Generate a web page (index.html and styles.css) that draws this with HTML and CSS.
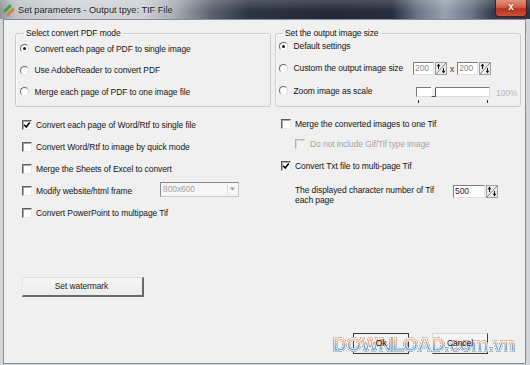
FILE: index.html
```html
<!DOCTYPE html>
<html>
<head>
<meta charset="utf-8">
<title>Set parameters</title>
<link rel="stylesheet" href="styles.css">
</head>
<body>
<div class="window">
  <div class="titlebar">
    <svg class="appicon" viewBox="0 0 12 12" width="12" height="12">
      <line x1="2" y1="7" x2="7" y2="2" stroke="#3f9a3a" stroke-width="2.6" stroke-linecap="round"/>
      <line x1="5" y1="10.5" x2="10" y2="5.5" stroke="#e0782e" stroke-width="2.6" stroke-linecap="round"/>
    </svg>
    <span class="title">Set parameters - Output tpye: TIF File</span>
    <div class="close">x</div>
  </div>

  <div class="client">
    <div class="groups">
      <fieldset class="group group-pdf">
        <legend>Select convert PDF mode</legend>
        <div class="opt"><span class="radio on"></span><span>Convert each page of PDF to single image</span></div>
        <div class="opt"><span class="radio"></span><span>Use AdobeReader to convert PDF</span></div>
        <div class="opt"><span class="radio"></span><span>Merge each page of PDF to one image file</span></div>
      </fieldset>
      <fieldset class="group group-size">
        <legend>Set the output image size</legend>
        <div class="opt opt-first"><span class="radio on"></span><span>Default settings</span></div>
        <div class="opt opt-mid">
          <span class="radio"></span><span class="optlbl">Custom the output image size</span>
          <div class="spin">
            <span class="field">200</span>
            <svg class="spinbtn" viewBox="0 0 12 13" width="12" height="13">
              <rect x="0.5" y="0.5" width="11" height="12" fill="#ececec" stroke="#a0a0a0"/>
              <line x1="1" y1="12" x2="11" y2="1" stroke="#666" stroke-width="0.8"/>
              <path d="M3.5 1.6 L1.7 4.2 H5.3Z" fill="#111"/>
              <line x1="3.5" y1="3.8" x2="3.5" y2="7" stroke="#111" stroke-width="1"/>
              <path d="M8.5 11.4 L6.7 8.8 H10.3Z" fill="#111"/>
              <line x1="8.5" y1="6" x2="8.5" y2="9.2" stroke="#111" stroke-width="1"/>
            </svg>
          </div>
          <span class="times">x</span>
          <div class="spin">
            <span class="field">200</span>
            <svg class="spinbtn" viewBox="0 0 12 13" width="12" height="13">
              <rect x="0.5" y="0.5" width="11" height="12" fill="#ececec" stroke="#a0a0a0"/>
              <line x1="1" y1="12" x2="11" y2="1" stroke="#666" stroke-width="0.8"/>
              <path d="M3.5 1.6 L1.7 4.2 H5.3Z" fill="#111"/>
              <line x1="3.5" y1="3.8" x2="3.5" y2="7" stroke="#111" stroke-width="1"/>
              <path d="M8.5 11.4 L6.7 8.8 H10.3Z" fill="#111"/>
              <line x1="8.5" y1="6" x2="8.5" y2="9.2" stroke="#111" stroke-width="1"/>
            </svg>
          </div>
        </div>
        <div class="opt opt-last">
          <span class="radio"></span><span class="optlbl">Zoom image as scale</span>
          <div class="slider">
            <div class="track"><span class="thumb"></span></div>
            <div class="ticks"><span></span><span></span></div>
          </div>
          <span class="pct">100%</span>
        </div>
      </fieldset>
    </div>

    <div class="checks">
      <div class="col col-left">
        <div class="crow"><span class="cb on"><svg viewBox="0 0 8 8" width="8" height="8"><path d="M1.2 3.8 L3.2 6 L6.8 1.6" fill="none" stroke="#000" stroke-width="1.6"/></svg></span><span>Convert each page of Word/Rtf to single file</span></div>
        <div class="crow"><span class="cb"></span><span>Convert Word/Rtf to image by quick mode</span></div>
        <div class="crow"><span class="cb"></span><span>Merge the Sheets of Excel to convert</span></div>
        <div class="crow"><span class="cb"></span><span class="clbl">Modify website/html frame</span>
          <div class="combo"><span class="combo-text">800x600</span><span class="combo-btn"><svg viewBox="0 0 7 4" width="7" height="4"><path d="M1 0.5 H6 L3.5 3.5Z" fill="#9a9a9a"/></svg></span></div>
        </div>
        <div class="crow"><span class="cb"></span><span>Convert PowerPoint to multipage Tif</span></div>
      </div>
      <div class="col col-right">
        <div class="crow r1"><span class="cb"></span><span>Merge the converted images to one Tif</span></div>
        <div class="crow r2 indent"><span class="cb disabled"></span><span class="disabled-text">Do not include Gif/Tif type image</span></div>
        <div class="crow r3"><span class="cb on"><svg viewBox="0 0 8 8" width="8" height="8"><path d="M1.2 3.8 L3.2 6 L6.8 1.6" fill="none" stroke="#000" stroke-width="1.6"/></svg></span><span>Convert Txt file to multi-page Tif</span></div>
        <div class="tifrow indent">
          <span class="tiflbl">The displayed character number of Tif each page</span>
          <div class="spin spin-500">
            <span class="field field-dark">500</span>
            <svg class="spinbtn" viewBox="0 0 12 13" width="12" height="13">
              <rect x="0.5" y="0.5" width="11" height="12" fill="#ececec" stroke="#a0a0a0"/>
              <line x1="1" y1="12" x2="11" y2="1" stroke="#666" stroke-width="0.8"/>
              <path d="M3.5 1.6 L1.7 4.2 H5.3Z" fill="#111"/>
              <line x1="3.5" y1="3.8" x2="3.5" y2="7" stroke="#111" stroke-width="1"/>
              <path d="M8.5 11.4 L6.7 8.8 H10.3Z" fill="#111"/>
              <line x1="8.5" y1="6" x2="8.5" y2="9.2" stroke="#111" stroke-width="1"/>
            </svg>
          </div>
        </div>
      </div>
    </div>

    <div class="wm-row"><div class="btn btn-wm">Set watermark</div></div>

    <div class="actions">
      <div class="btn btn-ok"><span class="btn-label">Ok</span></div>
      <div class="btn btn-cancel"><span class="btn-label">Cancel</span></div>
    </div>

    <div class="stamp">DOWNLOAD<span class="stamp-small">.com.vn</span></div>
  </div>
</div>
</body>
</html>
```

FILE: styles.css
```css
* { box-sizing: border-box; }

html, body {
  margin: 0;
  padding: 0;
}

body {
  width: 530px;
  height: 365px;
  overflow: hidden;
  background: #d2d6da;
  font-family: "Liberation Sans", Arial, sans-serif;
  font-size: 8.5px;
  letter-spacing: -0.1px;
  color: #151515;
}

.window {
  display: flex;
  flex-direction: column;
  height: 365px;
}

/* ---------- title bar ---------- */
.titlebar {
  height: 19px;
  flex: none;
  display: flex;
  align-items: center;
  background:
    linear-gradient(to bottom, rgba(255,255,255,0.18), rgba(255,255,255,0) 60%),
    linear-gradient(to right, #8f959c 0%, #bfc3c7 3%, #d2d5d8 14%, #cdd0d3 27%, #a8adb3 33%, #59616d 40%, #2c3444 47%, #222938 62%, #262e3e 74%, #6e7888 79%, #98a2b0 84%, #6b7585 89%, #343c4c 93%, #2e3646 100%);
}

.appicon {
  margin-left: 3px;
  flex: none;
}

.title {
  margin-left: 3px;
  font-size: 9.2px;
  letter-spacing: 0;
  color: #1c1c1c;
  text-shadow: 0 0 3px #e6e8ea;
}

.close {
  margin-left: auto;
  margin-right: 3px;
  align-self: flex-start;
  width: 32px;
  height: 17px;
  border: 1px solid #4c1a14;
  border-top: none;
  border-radius: 0 0 4px 4px;
  background: linear-gradient(to bottom, #e4907c 0%, #d0604a 45%, #b8321e 55%, #c8503a 100%);
  color: #fff;
  font-weight: bold;
  font-size: 10px;
  letter-spacing: 0;
  line-height: 14px;
  text-align: center;
  text-shadow: 0 0 2px #5a1a10;
}

/* ---------- client ---------- */
.client {
  position: relative;
  width: 523px;
  height: 345px;
  margin-left: 3px;
  background: #f0f0f0;
  border: 1px solid #8a8c90;
  display: flex;
  flex-direction: column;
}

.groups {
  display: flex;
  gap: 4px;
  margin: 8px 0 0 11px;
  align-items: stretch;
}

.group {
  margin: 0;
  min-width: 0;
  border: 1px solid #c9ccd0;
  border-radius: 3px;
  box-shadow: inset 1px 1px 0 #fafafa;
}

.group legend {
  line-height: 10px;
  padding: 0 2px;
  margin-left: 4px;
  color: #111;
}

.group-pdf {
  width: 256px;
  padding: 0 0 3px 4px;
}

.group-pdf .opt {
  height: 21.5px;
}

.group-size {
  width: 246px;
  padding: 0 0 3px 3px;
}

.opt {
  display: flex;
  align-items: center;
  white-space: nowrap;
}

.opt-first { height: 22px; margin-top: -3px; }
.opt-mid { height: 22px; }
.opt-last { height: 23px; }

.optlbl {
  width: 119.5px;
  flex: none;
}

.radio {
  width: 9px;
  height: 9px;
  flex: none;
  margin-right: 5.5px;
  border-radius: 50%;
  border: 1px solid;
  border-color: #6a6a6a #d8d8d8 #ececec #6a6a6a;
  background: #fff;
  position: relative;
}

.radio.on::after {
  content: "";
  position: absolute;
  left: 2px;
  top: 2px;
  width: 3px;
  height: 3px;
  border-radius: 50%;
  background: #111;
}

/* spinners */
.spin {
  display: flex;
  align-items: center;
  height: 13px;
  flex: none;
}

.field {
  width: 21px;
  height: 13px;
  background: #fff;
  border: 1px solid;
  border-color: #7c7c7c #e2e2e2 #e2e2e2 #7c7c7c;
  color: #8c8c8c;
  line-height: 11px;
  padding-left: 1px;
}

.spinbtn {
  margin-left: 1px;
  flex: none;
}

.times {
  margin: 2px 3px 0 3px;
  color: #333;
}

/* slider */
.slider {
  align-self: flex-start;
  margin-top: 8px;
  margin-left: 3px;
  width: 74px;
  flex: none;
}

.track {
  height: 10px;
  background: #fff;
  border: 1px solid;
  border-color: #7c7c7c #dcdcdc #dcdcdc #7c7c7c;
  position: relative;
}

.thumb {
  position: absolute;
  left: 14px;
  top: -1px;
  width: 5px;
  height: 10px;
  background: #f0f0f0;
  border: 1px solid;
  border-color: #fff #555 #555 #fff;
}

.ticks {
  display: flex;
  justify-content: space-between;
  padding: 0 2px;
  margin-top: 3px;
}

.ticks span {
  width: 1px;
  height: 3px;
  background: #333;
}

.pct {
  margin-left: 6px;
  margin-top: 4px;
  color: #b8b8b8;
}

/* ---------- checkbox columns ---------- */
.checks {
  display: flex;
  margin: 7px 0 0 18px;
}

.col-left {
  width: 259px;
  flex: none;
}

.crow {
  display: flex;
  align-items: center;
  gap: 4px;
  height: 22px;
  white-space: nowrap;
}

.r1 { height: 20px; }
.r2 { height: 21px; }
.r3 { height: 22px; }

.indent { margin-left: 14px; }

.cb {
  width: 10px;
  height: 10px;
  flex: none;
  background: #fff;
  border: 1px solid;
  border-color: #5e5e5e #e8e8e8 #e8e8e8 #5e5e5e;
  box-shadow: inset 1px 1px 0 #a8a8a8;
  display: flex;
  align-items: center;
  justify-content: center;
}

.cb.disabled {
  background: #f4f4f4;
  border-color: #b4b4b4 #eee #eee #b4b4b4;
  box-shadow: inset 1px 1px 0 #d8d8d8;
}

.disabled-text {
  color: #a6a6a6;
  margin-left: 1px;
}

.clbl {
  width: 120px;
  flex: none;
}

.combo {
  width: 79px;
  height: 15px;
  display: flex;
  align-items: center;
  background: #f6f6f6;
  border: 1px solid;
  border-color: #8a8a8a #c8c8c8 #c8c8c8 #8a8a8a;
  margin-top: -3px;
}

.combo-text {
  flex: 1;
  color: #a2a2a2;
  padding-left: 2px;
}

.combo-btn {
  width: 10px;
  height: 11px;
  margin-right: 1px;
  display: flex;
  align-items: center;
  justify-content: center;
  border-left: 1px solid #e0e0e0;
}

.tifrow {
  display: flex;
  align-items: flex-start;
  margin-top: 8px;
}

.tiflbl {
  width: 150px;
  line-height: 10.5px;
  flex: none;
}

.spin-500 {
  margin-left: 8px;
}

.spin-500 .field {
  width: 32px;
}

.field-dark {
  color: #222;
}

/* ---------- buttons ---------- */
.btn {
  display: flex;
  align-items: center;
  justify-content: center;
  background: linear-gradient(to bottom, #f6f6f6, #ececec);
  color: #1a1a1a;
}

.wm-row {
  margin: 53px 0 0 18px;
}

.btn-wm {
  width: 122px;
  height: 20px;
  border-top: 1px solid #dcdcdc;
  border-left: 1px solid #e6e6e6;
  border-right: 2px solid #6a6a6a;
  border-bottom: 2px solid #6a6a6a;
  padding-right: 2px;
}

.actions {
  display: flex;
  gap: 23px;
  margin: 36px 0 0 349px;
}

.btn-ok,
.btn-cancel {
  width: 56px;
  height: 21px;
}

.btn-ok {
  border: 1px solid #3c3c3c;
}

.btn-cancel {
  border-top: 1px solid #d8d8d8;
  border-left: 1px solid #d8d8d8;
  border-right: 1px solid #404040;
  border-bottom: 1px solid #404040;
}

/* button captions stay above the watermark stamp, as in the reference */
.btn-label {
  position: relative;
  z-index: 2;
  color: #111;
}

/* ---------- download.com.vn stamp (overlay) ---------- */
.stamp {
  position: absolute;
  z-index: 1;
  left: 329px;
  top: 315px;
  font-family: "Liberation Sans", Arial, sans-serif;
  font-weight: bold;
  font-size: 19px;
  line-height: 20px;
  letter-spacing: -0.3px;
  white-space: nowrap;
  background: linear-gradient(to bottom, #f4c8ac 0%, #eca47c 42%, #74b0dc 58%, #3a8ace 100%);
  -webkit-background-clip: text;
  background-clip: text;
  color: transparent;
  -webkit-text-stroke: 0.8px #ffffff;
  filter: drop-shadow(0 0 0.7px #5a5a5a) drop-shadow(0 0 0.5px #777);
  pointer-events: none;
}

.stamp-small {
  letter-spacing: -0.2px;
}
```
